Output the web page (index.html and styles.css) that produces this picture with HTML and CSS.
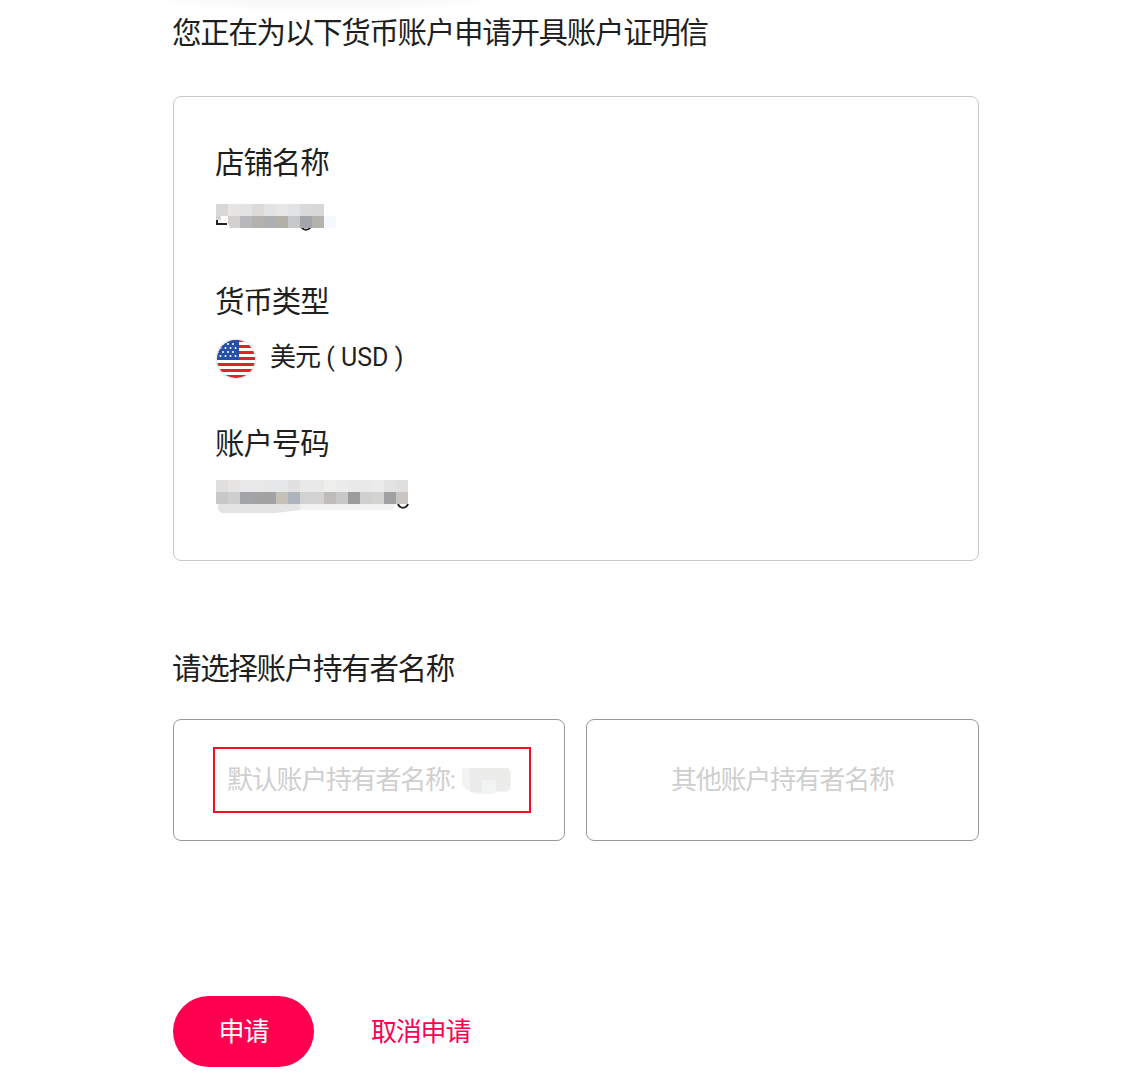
FILE: index.html
```html
<!DOCTYPE html>
<html lang="zh-CN">
<head>
<meta charset="utf-8">
<title>账户证明信</title>
<link rel="stylesheet" href="styles.css">
</head>
<body>
<div class="top-shade"></div>
<main class="page">
  <h1 class="title">您正在为以下货币账户申请开具账户证明信</h1>
  <section class="card">
    <div class="field field-store">
      <div class="label">店铺名称</div>
      <svg class="mosaic mosaic-store" width="120" height="28" viewBox="0 0 120 28">
        <path d="M1 8v12h10" fill="none" stroke="#222" stroke-width="2"/>
        <path d="M85 22c2 5 8 5 10 0" fill="none" stroke="#222" stroke-width="2"/>
        <g>
          <rect x="0" y="0" width="12" height="12" fill="#d9d8d8"/><rect x="12" y="0" width="12" height="12" fill="#e6e5e3"/><rect x="24" y="0" width="12" height="12" fill="#e1e3e5"/><rect x="36" y="0" width="12" height="12" fill="#dcdbd9"/><rect x="48" y="0" width="12" height="12" fill="#e1e3e5"/><rect x="60" y="0" width="12" height="12" fill="#e9e7e5"/><rect x="72" y="0" width="12" height="12" fill="#e2e3e5"/><rect x="84" y="0" width="12" height="12" fill="#dadadb"/><rect x="96" y="0" width="12" height="12" fill="#d9d8d7"/>
          <polygon points="0,12 12,12 12,19 14,24 36,24 36,12" fill="#d2d1cf"/>
          <rect x="0" y="12" width="5" height="4" fill="#d2d1cf"/>
          <rect x="24" y="12" width="12" height="12" fill="#b6b8bc"/><rect x="36" y="12" width="12" height="12" fill="#b3b2ae"/><rect x="48" y="12" width="12" height="12" fill="#aeafb2"/><rect x="60" y="12" width="12" height="12" fill="#b3b0aa"/><rect x="72" y="12" width="12" height="12" fill="#c6c7c9"/><rect x="84" y="12" width="12" height="12" fill="#a3a5a9"/><rect x="96" y="12" width="12" height="12" fill="#b5b2ad"/><rect x="108" y="12" width="12" height="12" fill="#f5f8fc"/>
        </g>
      </svg>
    </div>
    <div class="field field-currency">
      <div class="label">货币类型</div>
      <div class="currency">
        <svg class="flag" width="42" height="42" viewBox="0 0 42 42">
          <defs><clipPath id="flag-clip"><circle cx="21" cy="21" r="19"/></clipPath></defs>
          <circle cx="21" cy="21" r="20.500" fill="#ececec"/>
          <g clip-path="url(#flag-clip)">
            <rect x="0" y="0" width="42" height="42" fill="#fff"/>
            <rect x="0" y="1" width="42" height="3" fill="#e0232b"/>
            <rect x="0" y="7" width="42" height="3" fill="#e0232b"/>
            <rect x="0" y="13" width="42" height="3" fill="#e0232b"/>
            <rect x="0" y="19" width="42" height="3" fill="#e0232b"/>
            <rect x="0" y="25" width="42" height="3" fill="#e0232b"/>
            <rect x="0" y="31" width="42" height="3" fill="#e0232b"/>
            <rect x="0" y="37" width="42" height="4" fill="#e0232b"/>
            <rect x="0" y="0" width="24" height="22" fill="#2450a8"/>
            <g fill="#fff">
              <circle cx="8" cy="6" r="1"/><circle cx="13" cy="6" r="1"/><circle cx="18" cy="6" r="1"/>
              <circle cx="5.500" cy="10" r="1"/><circle cx="10.500" cy="10" r="1"/><circle cx="15.500" cy="10" r="1"/><circle cx="20.500" cy="10" r="1"/>
              <circle cx="3" cy="14" r="1"/><circle cx="8" cy="14" r="1"/><circle cx="13" cy="14" r="1"/><circle cx="18" cy="14" r="1"/>
              <circle cx="5.500" cy="18" r="1"/><circle cx="10.500" cy="18" r="1"/><circle cx="15.500" cy="18" r="1"/><circle cx="20.500" cy="18" r="1"/>
            </g>
          </g>
        </svg>
        <span class="currency-name"><span class="cjk-tight">美元</span> ( USD )</span>
      </div>
    </div>
    <div class="field field-account">
      <div class="label">账户号码</div>
      <svg class="mosaic mosaic-account" width="196" height="36" viewBox="0 0 196 36">
        <path d="M182 24c2 5 8 5 10 0" fill="none" stroke="#222" stroke-width="2"/>
        <g>
          <rect x="0" y="0" width="12" height="12" fill="#dfdfdf"/><rect x="12" y="0" width="12" height="12" fill="#e6e5e3"/><rect x="24" y="0" width="24" height="12" fill="#e8e8e8"/><rect x="48" y="0" width="24" height="12" fill="#e6e7e8"/><rect x="72" y="0" width="12" height="12" fill="#e1e1e1"/><rect x="84" y="0" width="24" height="12" fill="#e9e9e9"/><rect x="108" y="0" width="12" height="12" fill="#efefed"/><rect x="120" y="0" width="12" height="12" fill="#ebebeb"/><rect x="132" y="0" width="24" height="12" fill="#e8e9e8"/><rect x="156" y="0" width="12" height="12" fill="#ebebeb"/><rect x="168" y="0" width="12" height="12" fill="#e3e3e4"/><rect x="180" y="0" width="12" height="12" fill="#e0dfdd"/>
          <rect x="0" y="12" width="12" height="12" fill="#c9c8c6"/><rect x="12" y="12" width="12" height="12" fill="#cfcfcf"/><rect x="24" y="12" width="12" height="12" fill="#a3a4a8"/><rect x="36" y="12" width="24" height="12" fill="#a3a3a3"/><rect x="60" y="12" width="12" height="12" fill="#c5c0b8"/><rect x="72" y="12" width="12" height="12" fill="#adb4bc"/><rect x="84" y="12" width="24" height="12" fill="#d2d2d2"/><rect x="108" y="12" width="12" height="12" fill="#bfbdbb"/><rect x="120" y="12" width="12" height="12" fill="#c8c8c8"/><rect x="132" y="12" width="12" height="12" fill="#9b9b9b"/><rect x="144" y="12" width="12" height="12" fill="#d0d0d0"/><rect x="156" y="12" width="12" height="12" fill="#d3d3d2"/><rect x="168" y="12" width="12" height="12" fill="#a1a1a4"/><rect x="180" y="12" width="12" height="12" fill="#c8c5c3"/>
          <polygon points="2,24 84,24 84,30 60,33 6,33 2,30" fill="#e4e4e4"/>
          <polygon points="84,24 180,24 176,30 84,30" fill="#f2f2f2"/>
        </g>
      </svg>
    </div>
  </section>
  <h2 class="subtitle">请选择账户持有者名称</h2>
  <div class="options">
    <div class="option option-default">
      <span class="option-text">默认账户持有者名称:</span>
      <svg class="name-mask" width="50" height="26" viewBox="0 0 50 26">
        <path d="M43 4h5v18h-5z" fill="#b9c2cc"/>
        <path d="M0 0h46l3 4v16l-3 4H34l-2 2H14l-6-2-8-6z" fill="#f4f4f4"/>
        <path d="M7 0h39l2 4v14l-3 5H34V12H20v12H8z" fill="#ececeb"/>
        <path d="M20 12h14v12H20z" fill="#f2f3f3"/>
      </svg>
      <span class="highlight"></span>
    </div>
    <div class="option"><span class="option-text">其他账户持有者名称</span></div>
  </div>
  <div class="actions">
    <button class="btn-apply" type="button"><span class="btn-label">申请</span></button>
    <a class="link-cancel" href="#">取消申请</a>
  </div>
</main>
</body>
</html>
```

FILE: styles.css
```css
* { box-sizing: border-box; }
html, body { margin: 0; padding: 0; background: #fff; overflow: hidden; }
body {
  height: 1085px;
  position: relative;
  font-family: Roboto, "Noto Sans CJK SC", sans-serif;
  color: #1f1f1f;
}
.top-shade {
  position: absolute;
  left: 150px;
  top: -12px;
  width: 350px;
  height: 24px;
  background: radial-gradient(closest-side, #f8f8f8 40%, #fff);
}
.page {
  position: relative;
  width: 806px;
  margin-left: 173px;
  padding-top: 13px;
}
.title {
  margin: 0 0 0 -1px;
  font-size: 29.500px;
  letter-spacing: -1.300px;
  line-height: 40px;
  font-weight: 400;
  height: 83px;
}
.card {
  height: 465px;
  border: 1px solid #c9c9c9;
  border-radius: 8px;
  padding: 46px 41px 0;
}
.label {
  font-size: 29.500px;
  letter-spacing: -1.100px;
  line-height: 40px;
  height: 40px;
}
.mosaic { display: block; }
.field-store { height: 139px; }
.mosaic-store { margin-top: 21px; margin-left: 1px; }
.field-currency { height: 142px; }
.currency {
  display: flex;
  align-items: center;
  gap: 13px;
  margin-top: 15px;
  margin-left: 1px;
}
.flag { margin-left: -1px; }
.currency-name { font-size: 25px; line-height: 40px; margin-bottom: 2px; }
.cjk-tight { font-size: 26px; letter-spacing: -1px; margin-right: 0; }
.mosaic-account { margin-top: 16px; margin-left: 1px; }
.subtitle {
  margin: 88px 0 0 -1px;
  font-size: 29.500px;
  letter-spacing: -1.300px;
  line-height: 40px;
  font-weight: 400;
}
.options {
  display: grid;
  grid-template-columns: 392px 393px;
  gap: 21px;
  margin-top: 30px;
}
.option {
  position: relative;
  height: 122px;
  border: 1px solid #999;
  border-radius: 8px;
  display: flex;
  align-items: center;
  justify-content: center;
}
.option-default { justify-content: flex-start; padding-left: 53px; }
.option-text {
  font-size: 26px;
  letter-spacing: -1.250px;
  line-height: 34px;
  color: #cfcfcf;
}
.name-mask {
  display: block;
  margin-left: 7px;
  margin-top: 1px;
}
.highlight {
  position: absolute;
  left: 39px;
  top: 27px;
  width: 318px;
  height: 66px;
  border: 2px solid #ee1122;
}
.actions {
  display: flex;
  align-items: center;
  gap: 57px;
  margin-top: 155px;
}
.btn-apply {
  width: 141px;
  height: 71px;
  border: 0;
  border-radius: 36px;
  background: #ff0050;
  color: #fff;
  font-family: inherit;
  font-size: 26px;
  letter-spacing: -1px;
  padding: 0 0 5px;
}
.btn-label { display: block; }
.link-cancel {
  color: #ff0050;
  font-size: 26px;
  letter-spacing: -1.200px;
  margin-bottom: 5px;
  text-decoration: none;
}
```
